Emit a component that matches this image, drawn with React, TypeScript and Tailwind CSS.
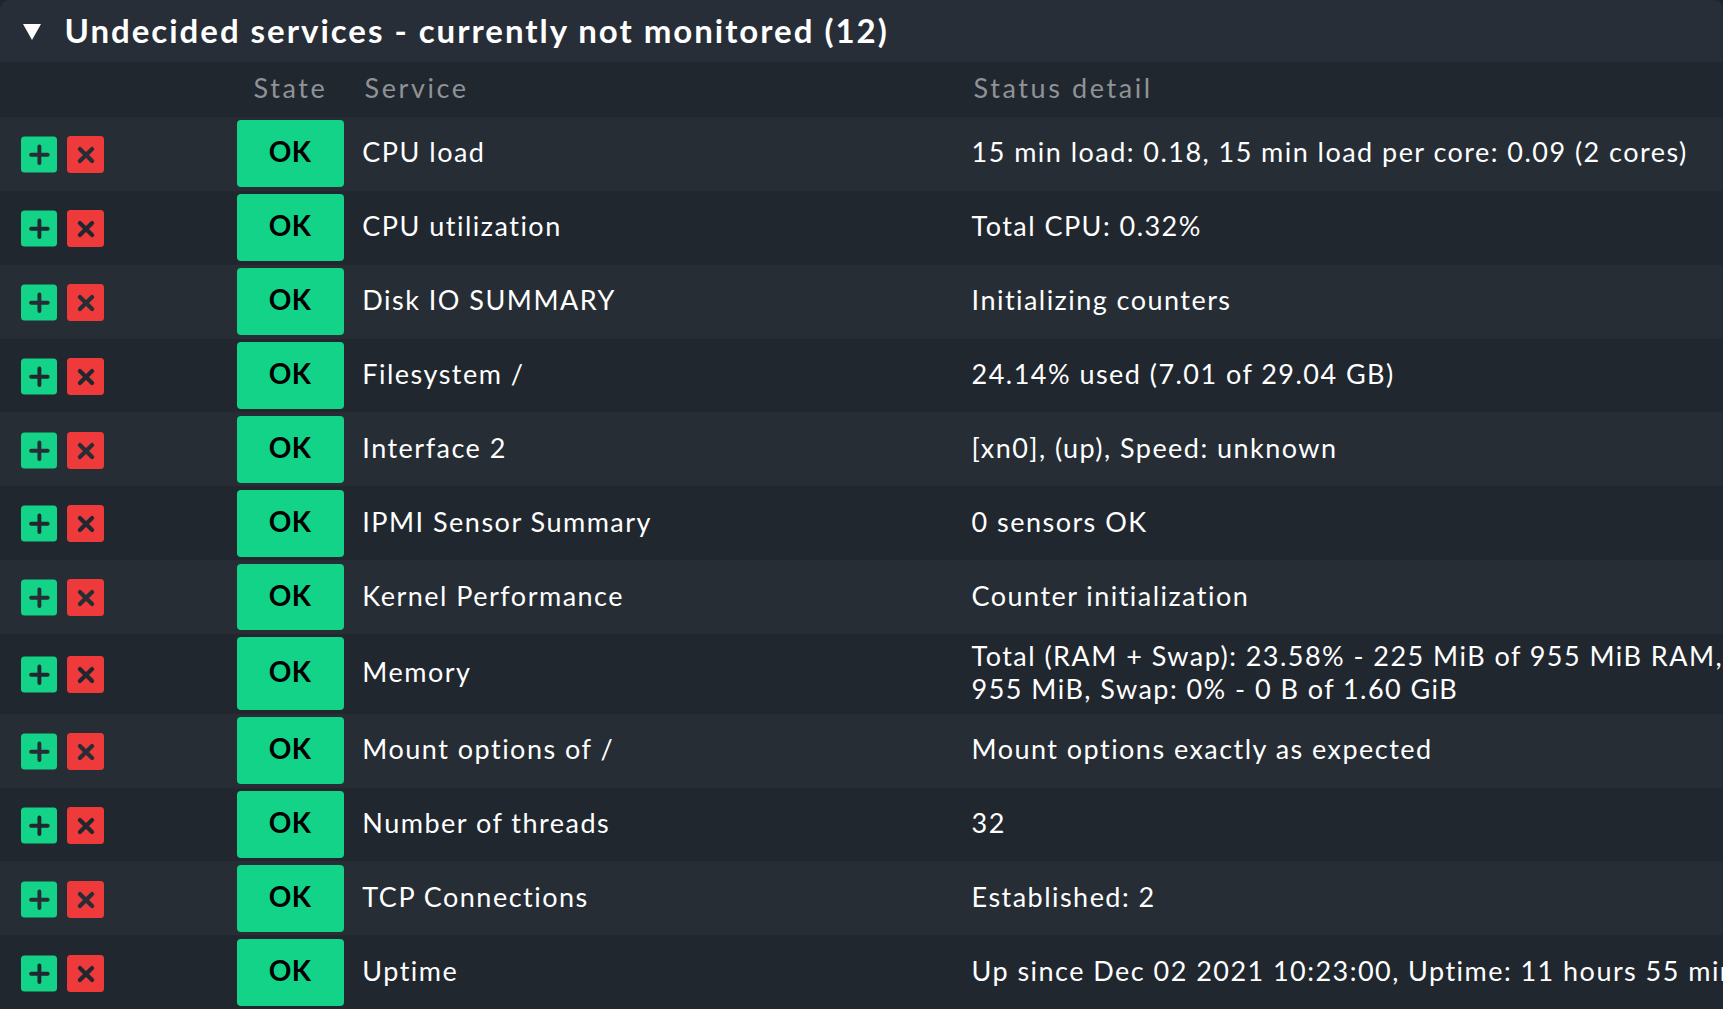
import React from "react";
import clsx from "clsx";

type Service = {
  name: string;
  detail: string[];
  row: string;
  icons?: string;
  badge?: string;
};

const SERVICES: Service[] = [
  { name: "CPU load", detail: ["15 min load: 0.18, 15 min load per core: 0.09 (2 cores)"], row: "h-[74px] pt-[3px] pb-1" },
  { name: "CPU utilization", detail: ["Total CPU: 0.32%"], row: "h-[74px] pt-[3px] pb-1" },
  { name: "Disk IO SUMMARY", detail: ["Initializing counters"], row: "h-[74px] pt-[3px] pb-1" },
  { name: "Filesystem /", detail: ["24.14% used (7.01 of 29.04 GB)"], row: "h-[73px] pt-[3px] pb-[3px]" },
  { name: "Interface 2", detail: ["[xn0], (up), Speed: unknown"], row: "h-[74px] pt-1 pb-[3px]" },
  { name: "IPMI Sensor Summary", detail: ["0 sensors OK"], row: "h-[74px] pt-1 pb-[3px]", icons: "pt-0" },
  { name: "Kernel Performance", detail: ["Counter initialization"], row: "h-[74px] pt-1 pb-1", icons: "pt-px", badge: "pb-1" },
  {
    name: "Memory",
    detail: ["Total (RAM + Swap): 23.58% - 225 MiB of 955 MiB RAM,", "955 MiB, Swap: 0% - 0 B of 1.60 GiB"],
    row: "h-20 pt-[3px] pb-1",
  },
  { name: "Mount options of /", detail: ["Mount options exactly as expected"], row: "h-[74px] pt-[3px] pb-1" },
  { name: "Number of threads", detail: ["32"], row: "h-[73px] pt-[3px] pb-[3px]" },
  { name: "TCP Connections", detail: ["Established: 2"], row: "h-[74px] pt-1 pb-[3px]" },
  { name: "Uptime", detail: ["Up since Dec 02 2021 10:23:00, Uptime: 11 hours 55 minutes"], row: "h-[74px] pt-1 pb-[3px]", icons: "pt-px" },
];

function AddIcon({ stroke }: { stroke: string }) {
  return (
    <svg width="36" height="37" viewBox="0 0 36 37" className="shrink-0">
      <rect x="0" y="0.4" width="36" height="36.2" rx="3.5" fill="#13d389" />
      <path d="M18.4 10.5v16.6M10.1 18.8h16.6" stroke={stroke} strokeWidth="3.9" strokeLinecap="round" />
    </svg>
  );
}

function RemoveIcon({ stroke }: { stroke: string }) {
  return (
    <svg width="37" height="37" viewBox="0 0 37 37" className="ml-2.5 shrink-0">
      <rect width="37" height="37" rx="3.5" fill="#ee3a3b" />
      <path d="M12.9 13.1l12.2 12M25.1 13.1l-12.2 12" stroke={stroke} strokeWidth="4.2" strokeLinecap="round" />
    </svg>
  );
}

function ServiceRow({ service, odd }: { service: Service; odd: boolean }) {
  const bg = odd ? "#262d35" : "#21272f";
  return (
    <div className={clsx("flex items-stretch", service.row, odd ? "bg-[#262d35]" : "bg-[#21272f]")}>
      <div className={clsx("flex w-[237px] shrink-0 items-center pl-[21px]", service.icons ?? "pt-[2px]")}>
        <AddIcon stroke={bg} />
        <RemoveIcon stroke={bg} />
      </div>
      <div
        className={clsx(
          "flex w-[107px] shrink-0 items-center justify-center rounded-[4px] bg-[#13d389] pr-px text-[28px] leading-[33px] font-bold tracking-[0.4px] text-black",
          service.badge ?? "pb-[5px]",
        )}
      >
        OK
      </div>
      <div className="flex w-[609px] shrink-0 items-center pb-[4px] pl-[18.3px]">{service.name}</div>
      <div
        className={clsx(
          "flex shrink-0 flex-col justify-center pl-[18.6px] tracking-[1.46px]",
          service.detail.length > 1 ? "pb-[3px]" : "pb-1",
        )}
      >
        {service.detail.map((line) => (
          <div key={line}>{line}</div>
        ))}
      </div>
    </div>
  );
}

export default function App() {
  return (
    <div className="h-[1009px] w-[1723px] overflow-hidden bg-[#1e242b] font-['Lato',sans-serif] text-[27px] leading-[33px] tracking-[1.49px] whitespace-nowrap text-white">
      <div className="flex h-[62px] items-center rounded-t-[9px] bg-[#272e37] pb-[2px] pl-[23px] text-[33px] leading-[40px] font-bold tracking-[1.98px]">
        <svg width="18" height="16" viewBox="0 0 18 16" className="mt-[4px] mr-[23.5px] shrink-0">
          <path d="M0 0h18L9 16z" fill="#fff" />
        </svg>
        Undecided services - currently not monitored (12)
      </div>
      <div className="flex h-[55px] items-center bg-[#21272f] pb-[4px] tracking-[2.6px] text-[#8f9296]">
        <div className="ml-[253.5px] w-[111px]">State</div>
        <div className="w-[609px]">Service</div>
        <div>Status detail</div>
      </div>
      {SERVICES.map((s, i) => (
        <ServiceRow key={s.name} service={s} odd={i % 2 === 0} />
      ))}
    </div>
  );
}
